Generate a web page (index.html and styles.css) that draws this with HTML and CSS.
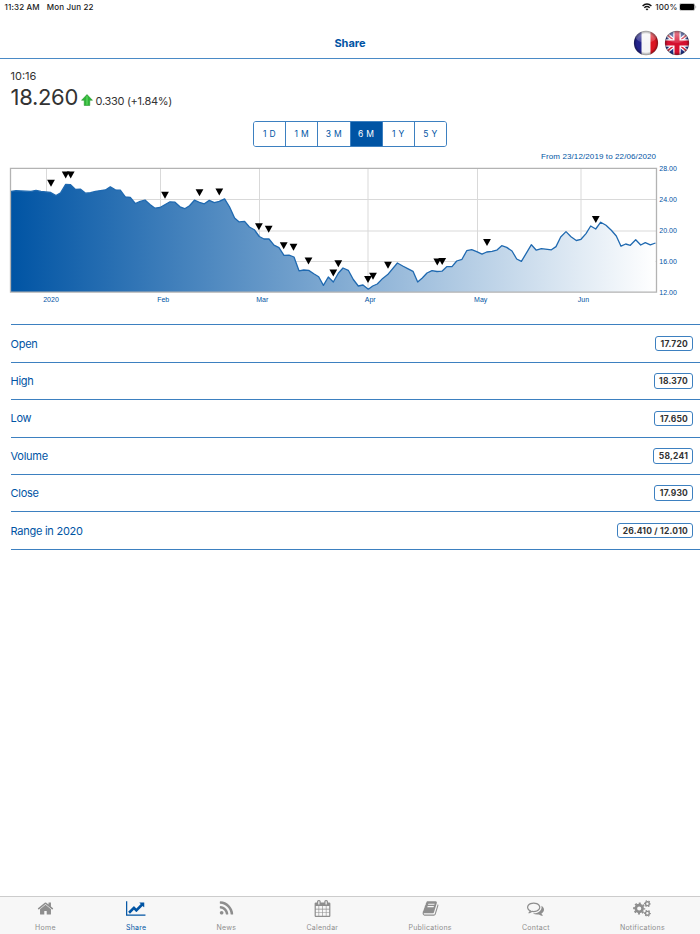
FILE: index.html
```html
<!DOCTYPE html>
<html lang="en">
<head>
<meta charset="utf-8">
<title>Share</title>
<link rel="stylesheet" href="styles.css">
</head>
<body>
<div class="app">
  <div class="status">
    <span class="clock">11:32 AM</span><span class="date">Mon Jun 22</span>
    <svg class="wifi" width="10" height="8" viewBox="0 0 10 8" fill="none" stroke="#111" stroke-width="1.4"><path d="M.6 2.9C3.2.3 6.8.3 9.4 2.9M2.3 4.7c1.6-1.5 3.8-1.5 5.4 0"/><path d="M3.5 6 5 7.6 6.500 6Q5 4.900 3.500 6z" fill="#111" stroke="none"/></svg>
    <span class="battery-text">100%</span>
    <svg width="18" height="8" viewBox="0 0 18 8"><rect x=".4" y=".4" width="15.400" height="7.200" rx="2" fill="none" stroke="#999" stroke-width=".6"/><rect x="1" y="1" width="14.200" height="6" rx="1.300" fill="#000"/><path d="M16.600 2.800q1.400 1.200 0 2.400z" fill="#777"/></svg>
  </div>
  <header class="header">
    <h1>Share</h1>
    <div class="flags">
      <svg width="26" height="26" viewBox="0 0 26 26">
        <defs>
          <clipPath id="disc"><circle cx="13" cy="13" r="12"/></clipPath>
          <radialGradient id="shade" cx=".5" cy=".5" r=".5"><stop offset=".75" stop-color="#000" stop-opacity="0"/><stop offset="1" stop-color="#000" stop-opacity=".4"/></radialGradient>
          <linearGradient id="gloss" x2="0" y2="1"><stop offset="0" stop-color="#fff" stop-opacity=".5"/><stop offset="1" stop-color="#fff" stop-opacity=".12"/></linearGradient>
        </defs>
        <g clip-path="url(#disc)">
          <path fill="#f4f4f6" d="M0 0h26v26H0z"/><path fill="#23238c" d="M0 0h8.500v26H0z"/><path fill="#dc1522" d="M17.500 0H26v26h-8.500z"/>
          <ellipse cx="13" cy="6.500" rx="10.500" ry="6.500" fill="url(#gloss)"/>
        </g>
        <circle cx="13" cy="13" r="12.200" fill="url(#shade)"/>
      </svg>
      <svg width="26" height="26" viewBox="0 0 26 26">
        <g clip-path="url(#disc)">
          <path fill="#23358e" d="M0 0h26v26H0z"/>
          <path d="M1 3l24 20M25 3 1 23" stroke="#fff" stroke-width="4"/>
          <path d="M1 3l24 20M25 3 1 23" stroke="#d5233d" stroke-width="1.500"/>
          <path d="M13 0v26M0 13h26" stroke="#fff" stroke-width="7.400"/>
          <path d="M13 0v26M0 13h26" stroke="#d5102f" stroke-width="5"/>
          <ellipse cx="13" cy="6.500" rx="10.500" ry="6.500" fill="url(#gloss)"/>
        </g>
        <circle cx="13" cy="13" r="12.200" fill="url(#shade)"/>
      </svg>
    </div>
  </header>
  <section class="quote">
    <div class="time">10:16</div>
    <div class="price-row">
      <span class="price">18.260</span>
      <svg class="up" width="12" height="12" viewBox="0 0 12 12"><path d="M6 .5 11.500 6.300H8.800V11.500H3.200V6.300H.5z" fill="#2fb637" stroke="#238f2b" stroke-width=".5"/><path d="M6 2.300v8.400" stroke="#5ed563" stroke-width="1.300"/></svg>
      <span class="change">0.330 (+1.84%)</span>
    </div>
  </section>
  <div class="periods">
    <button>1 D</button><button>1 M</button><button>3 M</button><button class="on">6 M</button><button>1 Y</button><button>5 Y</button>
  </div>
  <svg class="chart" width="700" height="160" viewBox="0 148 700 160">
    <defs>
      <linearGradient id="area" gradientUnits="userSpaceOnUse" x1="11" x2="656" y1="0" y2="0"><stop offset="0" stop-color="#0054a4"/><stop offset="1" stop-color="#fff"/></linearGradient>
      <path id="m" d="M-3.900 0h7.800L0 7z"/>
    </defs>
    <path class="grid" d="M46.500 168.500V292M160.500 168.500V292M259.500 168.500V292M368 168.500V292M477.500 168.500V292M581 168.500V292M11 199.500H656M11 231H656M11 261.500H656"/>
    <path fill="url(#area)" d="M11 292V191.300L16 190.700 31 191.400 36 190.300 41 191.400 50.700 192.500 56 195.600 60.700 192.700 65.700 184.300 70.300 184.600 75.500 189.400 80.600 189.200 85.600 193.200 90.500 192.700 95.500 191.300 105.400 190 110.300 186.800 115.300 189.800 120.300 190.200 125.300 196.800 130.300 197.500 135.300 203.500 140.200 201.400 145 200 150 204.500 155 208.200 160 207.500 170 201.800 175 202.200 180 206.800 184.700 208.700 189.500 205.800 194.400 200.200 199.400 202.400 204.300 203.800 209.300 200.400 214.300 202.600 219.300 201.400 224.600 198.800 229.600 207 234.600 218 239.200 221.900 244.600 221.300 249.400 227 254.300 229.700 259.300 236.500 264 239 269 239 274 245.200 279 247.700 284 255.300 289 255.200 294 257 299 270.800 303.800 270 308.700 270.400 313.800 273.800 318.700 276.700 323.400 285.400 328.300 277 333.300 282 338.300 273.300 343 268 348.300 270.300 353.300 279.500 358.300 286 363 285 368.300 289.200 372.700 286 377.300 284 382.700 278.400 387.700 274.600 397.400 263 402.700 266 407.700 268.600 413 271.300 417.700 282 422.300 278 427 273 432 270.600 437 271.500 442 271.200 446.700 266.700 452 266.700 456.700 261 462 259.300 466.700 250.700 471.700 249.600 476.700 251.700 482 254.200 486.700 252 492 251.300 496.700 250.200 501.700 245.700 506.700 247.400 512 251 516.700 259 521.400 261.400 531.400 244.700 536.300 250.200 541.400 248.600 551.400 249.800 556 246.600 560.700 237 566 231.600 571 236.700 576.300 240.500 581 239.300 586 233.600 590.700 226 595.700 229 600.700 222.200 606 225.300 611.300 230.300 616.300 236 621 246.200 625.700 244 630.300 245.300 635.700 239.700 640.700 245 645.300 242.600 650.300 244.900 655.500 243V292z"/>
    <path class="frame" d="M10.500 168.300H656.500V292.200H10.500z"/>
    <path class="line" d="M11 191.300L16 190.700 31 191.400 36 190.300 41 191.400 50.700 192.500 56 195.600 60.700 192.700 65.700 184.300 70.300 184.600 75.500 189.400 80.600 189.200 85.600 193.200 90.500 192.700 95.500 191.300 105.400 190 110.300 186.800 115.300 189.800 120.300 190.200 125.300 196.800 130.300 197.500 135.300 203.500 140.200 201.400 145 200 150 204.500 155 208.200 160 207.500 170 201.800 175 202.200 180 206.800 184.700 208.700 189.500 205.800 194.400 200.200 199.400 202.400 204.300 203.800 209.300 200.400 214.300 202.600 219.300 201.400 224.600 198.800 229.600 207 234.600 218 239.200 221.900 244.600 221.300 249.400 227 254.300 229.700 259.300 236.500 264 239 269 239 274 245.200 279 247.700 284 255.300 289 255.200 294 257 299 270.800 303.800 270 308.700 270.400 313.800 273.800 318.700 276.700 323.400 285.400 328.300 277 333.300 282 338.300 273.300 343 268 348.300 270.300 353.300 279.500 358.300 286 363 285 368.300 289.200 372.700 286 377.300 284 382.700 278.400 387.700 274.600 397.400 263 402.700 266 407.700 268.600 413 271.300 417.700 282 422.300 278 427 273 432 270.600 437 271.500 442 271.200 446.700 266.700 452 266.700 456.700 261 462 259.300 466.700 250.700 471.700 249.600 476.700 251.700 482 254.200 486.700 252 492 251.300 496.700 250.200 501.700 245.700 506.700 247.400 512 251 516.700 259 521.400 261.400 531.400 244.700 536.300 250.200 541.400 248.600 551.400 249.800 556 246.600 560.700 237 566 231.600 571 236.700 576.300 240.500 581 239.300 586 233.600 590.700 226 595.700 229 600.700 222.200 606 225.300 611.300 230.300 616.300 236 621 246.200 625.700 244 630.300 245.300 635.700 239.700 640.700 245 645.300 242.600 650.300 244.900 655.500 243"/>
    <g>
      <use href="#m" x="51" y="179.700"/><use href="#m" x="65.700" y="171.500"/><use href="#m" x="70.700" y="171.500"/><use href="#m" x="165" y="191.700"/><use href="#m" x="199.500" y="189.200"/><use href="#m" x="219.300" y="188.500"/><use href="#m" x="258.900" y="223.200"/><use href="#m" x="268.700" y="225.700"/><use href="#m" x="283.700" y="242.300"/><use href="#m" x="293.500" y="243.800"/><use href="#m" x="308.500" y="257.500"/><use href="#m" x="333.300" y="269.500"/><use href="#m" x="338.300" y="260.200"/><use href="#m" x="368" y="276"/><use href="#m" x="373" y="272.700"/><use href="#m" x="388" y="261.700"/><use href="#m" x="437.300" y="258.500"/><use href="#m" x="442.200" y="258"/><use href="#m" x="487" y="239"/><use href="#m" x="595.800" y="216"/>
    </g>
    <g class="labels">
      <text class="range" x="541" y="158.700" textLength="115">From 23/12/2019 to 22/06/2020</text>
      <text x="659.300" y="171.200">28.00</text><text x="659.300" y="202.200">24.00</text><text x="659.300" y="233.200">20.00</text><text x="659.300" y="264.200">16.00</text><text x="659.300" y="295.200">12.00</text>
      <g text-anchor="middle"><text x="51" y="301.500">2020</text><text x="163.200" y="301.500">Feb</text><text x="262.300" y="301.500">Mar</text><text x="370.200" y="301.500">Apr</text><text x="480.700" y="301.500">May</text><text x="583.500" y="301.500">Jun</text></g>
    </g>
  </svg>
  <dl class="stats">
    <div><dt>Open</dt><dd>17.720</dd></div>
    <div><dt>High</dt><dd>18.370</dd></div>
    <div><dt>Low</dt><dd>17.650</dd></div>
    <div><dt>Volume</dt><dd>58,241</dd></div>
    <div><dt>Close</dt><dd>17.930</dd></div>
    <div><dt>Range in 2020</dt><dd>26.410 / 12.010</dd></div>
  </dl>
  <nav class="tabs">
    <a><svg width="17" height="17" viewBox="0 0 1792 1792"><path d="M1472 992v480q0 26-19 45t-45 19h-384v-384h-256v384h-384q-26 0-45-19t-19-45v-480q0-1 .5-3t.5-3l575-474 575 474q1 2 1 6zm223-69l-62 74q-8 9-21 11h-3q-13 0-21-7l-692-577-692 577q-12 8-24 7-13-2-21-11l-62-74q-8-10-7-23.500t11-21.500l719-599q32-26 76-26t76 26l244 204v-195q0-14 9-23t23-9h192q14 0 23 9t9 23v408l219 182q10 8 11 21.500t-7 23.500z"/></svg><span>Home</span></a>
    <a class="on"><svg width="19.500" height="17" viewBox="0 0 2048 1792"><path d="M2048 1536v128h-2048v-1536h128v1408h1920zm-128-1248v435q0 21-19.500 29.500t-35.500-7.500l-121-121-633 633q-10 10-23 10t-23-10l-233-233-416 416-192-192 585-585q10-10 23-10t23 10l233 233 464-464-121-121q-16-16-7.500-35.500t29.500-19.500h435q14 0 23 9t9 23z"/></svg><span>Share</span></a>
    <a><svg width="17" height="17" viewBox="0 0 1792 1792"><path d="M576 1344q0 80-56 136t-136 56-136-56-56-136 56-136 136-56 136 56 56 136zm512 123q2 28-17 48-18 21-47 21h-135q-25 0-43-16.500t-20-41.500q-22-229-184.500-391.500t-391.500-184.500q-25-2-41.500-20t-16.500-43v-135q0-29 21-47 17-17 43-17h5q160 13 306 80.500t259 181.500q114 113 181.500 259t80.500 306zm512 2q2 27-18 47-18 20-46 20h-143q-26 0-44.500-17.500t-19.500-42.500q-12-215-101-408.500t-231.500-336-336-231.500-408.500-102q-25-1-42.500-19.500t-17.500-43.500v-143q0-28 20-46 18-18 44-18h3q262 13 501.500 120t425.500 294q187 186 294 425.500t120 501.500z"/></svg><span>News</span></a>
    <a><svg width="17" height="17" viewBox="0 0 1792 1792"><path d="M192 1664h288v-288h-288v288zm352 0h320v-288h-320v288zm-352-352h288v-320h-288v320zm352 0h320v-320h-320v320zm-352-384h288v-288h-288v288zm736 736h320v-288h-320v288zm-384-736h320v-288h-320v288zm768 736h288v-288h-288v288zm-384-352h320v-320h-320v320zm-352-864v-288q0-13-9.500-22.500t-22.500-9.500h-64q-13 0-22.500 9.500t-9.500 22.500v288q0 13 9.500 22.500t22.500 9.500h64q13 0 22.500-9.500t9.500-22.500zm736 864h288v-320h-288v320zm-384-384h320v-288h-320v288zm384 0h288v-288h-288v288zm32-480v-288q0-13-9.500-22.500t-22.500-9.500h-64q-13 0-22.500 9.500t-9.500 22.500v288q0 13 9.500 22.500t22.500 9.500h64q13 0 22.500-9.500t9.500-22.500zm384-64v1280q0 52-38 90t-90 38h-1408q-52 0-90-38t-38-90v-1280q0-52 38-90t90-38h128v-96q0-66 47-113t113-47h64q66 0 113 47t47 113v96h384v-96q0-66 47-113t113-47h64q66 0 113 47t47 113v96h128q52 0 90 38t38 90z"/></svg><span>Calendar</span></a>
    <a><svg width="17" height="17" viewBox="0 0 1792 1792"><path d="M1703 478q40 57 18 129l-275 906q-19 64-76.500 107.500t-122.500 43.500h-923q-77 0-148.500-53.500t-99.500-131.500q-24-67-2-127 0-4 3-27t4-37q1-8-3-21.500t-3-19.500q2-11 8-21t16.500-23.500 16.500-23.500q23-38 45-91.500t30-91.500q3-10 .5-30t-.5-28q3-11 17-28t17-23q21-36 42-92t25-90q1-9-2.500-32t.5-28q4-13 22-30.500t22-22.500q19-26 42.500-84.500t27.500-96.500q1-8-3-25.500t-2-26.500q2-8 9-18t18-23 17-21q8-12 16.500-30.500t15-35 16-36 19.500-32 26.500-23.500 36-11.500 47.500 5.500l-1 3q38-9 51-9h761q74 0 114 56t18 130l-274 906q-36 119-71.500 153.500t-128.500 34.500h-869q-27 0-38 15-11 16-1 43 24 70 144 70h923q29 0 56-15.500t35-41.500l300-987q7-22 5-57 38 15 59 43zm-1064 2q-4 13 2 22.500t20 9.500h608q13 0 25.500-9.500t16.500-22.500l21-64q4-13-2-22.500t-20-9.500h-608q-13 0-25.500 9.500t-16.500 22.500zm-83 256q-4 13 2 22.500t20 9.500h608q13 0 25.500-9.500t16.500-22.500l21-64q4-13-2-22.500t-20-9.500h-608q-13 0-25.500 9.500t-16.500 22.500z"/></svg><span>Publications</span></a>
    <a><svg width="17" height="17" viewBox="0 0 1792 1792"><path d="M704 384q-153 0-286 52t-211.500 141-78.500 191q0 82 53 158t149 132l97 56-35 84q34-20 62-39l44-31 53 10q78 14 153 14 153 0 286-52t211.500-141 78.500-191-78.500-191-211.500-141-286-52zm0-128q191 0 353.500 68.500t256.500 186.500 94 257-94 257-256.500 186.500-353.500 68.500q-86 0-176-16-124 88-278 128-36 9-86 16h-3q-11 0-20.500-8t-11.500-21q-1-3-1-6.500t.5-6.500 2-6l2.500-5 3.500-5.500 4-5 4.500-5 4-4.500q5-6 23-25t26-29.500 22.500-29 25-38.500 20.500-44q-124-72-195-177t-71-224q0-139 94-257t256.500-186.500 353.500-68.500zm822 1169q10 24 20.500 44t25 38.500 22.500 29 26 29.500 23 25q1 1 4 4.500t4.500 5 4 5 3.500 5.500l2.500 5 2 6 .5 6.500-1 6.500q-3 14-13 22t-22 7q-50-7-86-16-154-40-278-128-90 16-176 16-271 0-472-132 58 4 88 4 161 0 309-45t264-129q125-92 192-212t67-254q0-77-23-152 129 71 204 178t75 230q0 120-71 224.500t-195 176.500z"/></svg><span>Contact</span></a>
    <a><svg width="18" height="17" viewBox="0 0 18 17"><g fill="none" stroke="#8e8e8e"><circle cx="6.200" cy="8.500" r="3.400" stroke-width="2.700"/><circle cx="6.200" cy="8.500" r="5.200" stroke-width="1.700" stroke-dasharray="2.040 2.044" stroke-dashoffset="1.020"/><circle cx="14.400" cy="3.700" r="1.900" stroke-width="1.400"/><circle cx="14.400" cy="3.700" r="2.900" stroke-width="1.100" stroke-dasharray="1.500 1.537" stroke-dashoffset=".75"/><circle cx="14.400" cy="13.300" r="1.900" stroke-width="1.400"/><circle cx="14.400" cy="13.300" r="2.900" stroke-width="1.100" stroke-dasharray="1.500 1.537" stroke-dashoffset=".75"/></g></svg><span>Notifications</span></a>
  </nav>
</div>
</body>
</html>
```
FILE: styles.css
```css
* { box-sizing: border-box; }
body {
  margin: 0;
  background: #fff;
  color: #333;
  font-family: Inter, "Liberation Sans", sans-serif;
}
.app { display: flex; flex-direction: column; height: 934px; }

.status {
  display: flex;
  align-items: center;
  height: 14px;
  padding: 0 3.5px 0 4.5px;
  color: #1a1a1a;
  font-size: 8px;
  font-weight: 500;
  letter-spacing: 0.15px;
}
.date { margin-left: 7px; }
.wifi { margin-left: auto; margin-right: 3px; }
.battery-text { margin-right: 1px; }

.header {
  display: grid;
  grid-template-columns: 1fr auto 1fr;
  align-items: center;
  height: 45px;
  padding: 14px 10px 0;
  border-bottom: 1px solid #4a8ac6;
}
.header h1 {
  grid-column: 2;
  margin: 0;
  color: #0054a4;
  font-size: 11px;
  font-weight: 700;
}
.flags { display: flex; justify-content: flex-end; gap: 5.5px; }

.quote { height: 62px; padding: 11px 10.5px 0; }
.time { font-size: 11px; line-height: 13px; }
.price-row { display: flex; align-items: baseline; line-height: 28px; }
.price { font-size: 22px; font-weight: 400; letter-spacing: -0.3px; }
.up { margin: 0 2.5px 0 3px; align-self: center; position: relative; top: 1px; }
.change { font-size: 11px; letter-spacing: -0.3px; }

.periods {
  display: flex;
  width: 194px;
  height: 26px;
  margin: 0 auto;
  border: 1px solid #3d80c0;
  border-radius: 3px;
  overflow: hidden;
}
.periods button {
  flex: 1;
  padding: 0;
  border: 0;
  border-left: 1px solid #3d80c0;
  background: #fff;
  color: #0054a4;
  font: 400 8.5px Inter, sans-serif;
  letter-spacing: 0.35px;
}
.periods button:first-child { border-left: 0; }
.periods .on { background: #0054a4; color: #fff; }

.chart { display: block; margin-top: 1px; }
.grid { stroke: #d9d9d9; fill: none; }
.frame { stroke: #b3b3b3; stroke-width: 1.3; fill: none; }
.line { stroke: #1f69b0; stroke-width: 1.3; fill: none; stroke-linejoin: round; }
.labels { fill: #0054a4; font: 7px "Liberation Sans", sans-serif; }
.labels .range { font-size: 8px; }

.stats { margin: 16.3px 0 0 10.5px; border-top: 1px solid #3d80c0; }
.stats div {
  display: flex;
  align-items: center;
  justify-content: space-between;
  height: 37.430px;
  padding-right: 7px;
  border-bottom: 1px solid #3d80c0;
}
.stats dt { color: #0054a4; font-size: 11px; letter-spacing: -0.25px; line-height: 14px; }
.stats dd {
  margin: 0;
  height: 15.5px;
  padding: 0 4px 0 4.5px;
  border: 1px solid #3d80c0;
  border-radius: 3px;
  color: #333;
  font-size: 8.5px;
  font-weight: 700;
  letter-spacing: 0.2px;
  line-height: 14px;
}

.tabs {
  display: flex;
  height: 38px;
  margin-top: auto;
  border-top: 1px solid #ccc;
  background: #f7f7f7;
  color: #8e8e8e;
  font-size: 7px;
}
.tabs a {
  display: flex;
  flex: 1 1 auto;
  flex-direction: column;
  align-items: center;
  padding-top: 2.5px;
  fill: #8e8e8e;
}
.tabs span { margin-top: 6px; line-height: 9px; letter-spacing: 0.25px; }
.tabs .on { color: #0054a4; fill: #0054a4; }
```
